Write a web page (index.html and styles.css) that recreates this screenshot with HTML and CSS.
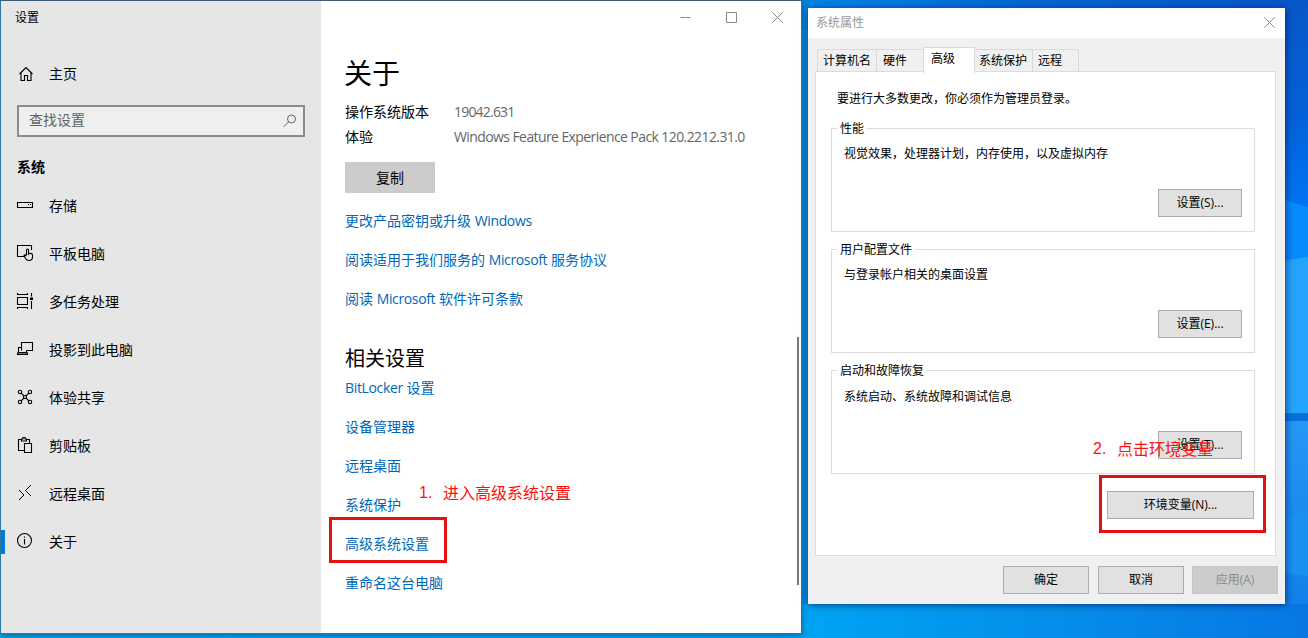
FILE: index.html
```html
<!DOCTYPE html>
<html lang="zh-CN">
<head>
<meta charset="utf-8">
<title>设置</title>
<link rel="stylesheet" href="styles.css">
</head>
<body>
<main class="desktop">
  <svg class="wallpaper" viewBox="0 0 1308 638" preserveAspectRatio="none" aria-hidden="true">
    <defs>
      <linearGradient id="top" x1="800" x2="1308" y1="0" y2="0" gradientUnits="userSpaceOnUse"><stop offset="0" stop-color="#0385e2"/><stop offset=".45" stop-color="#0467d6"/><stop offset="1" stop-color="#0856c8"/></linearGradient>
      <linearGradient id="side" x1="0" x2="0" y1="0" y2="1"><stop offset="0" stop-color="#0857c8"/><stop offset=".5" stop-color="#0460d8"/><stop offset="1" stop-color="#0078fa"/></linearGradient>
      <linearGradient id="low" x1="0" x2="0" y1="0" y2="1"><stop offset="0" stop-color="#2697f5"/><stop offset="1" stop-color="#1180ea"/></linearGradient>
      <linearGradient id="floor" x1="0" x2="1308" y1="0" y2="0" gradientUnits="userSpaceOnUse"><stop offset="0" stop-color="#00a5e8"/><stop offset=".62" stop-color="#00a3f3"/><stop offset=".82" stop-color="#058cea"/><stop offset="1" stop-color="#0877e4"/></linearGradient>
    </defs>
    <rect width="1308" height="638" fill="url(#top)"/>
    <rect x="1270" width="38" height="225" fill="url(#side)"/>
    <rect x="795" y="30" width="20" height="608" fill="#058fdf"/>
    <path d="M1270 196L1308 207V270H1270Z" fill="#058cfd"/>
    <path d="M1270 263L1308 257V420H1270Z" fill="#24a3fc"/>
    <rect x="1270" y="413" width="38" height="8" fill="#0870dd"/>
    <rect x="1270" y="421" width="38" height="183" fill="url(#low)"/>
    <path d="M1270 518L1308 511V576L1270 571Z" fill="#1a90f0"/>
    <rect y="604" width="1308" height="34" fill="url(#floor)"/>
  </svg>

  <section class="settings">
    <aside class="sidebar">
      <div class="app-title">设置</div>
      <div class="home">
        <svg class="icon" viewBox="0 0 16 16"><path d="M1.500 8L8 1.500 14.500 8M3 7v7.500h3.500V9.500h3v5H13V7"/></svg>
        <span>主页</span>
      </div>
      <div class="search">
        <span>查找设置</span>
        <svg class="search-icon" viewBox="0 0 14 14"><circle cx="8.500" cy="5" r="4"/><path d="M5.700 7.800L.8 12.700"/></svg>
      </div>
      <h2 class="group-title">系统</h2>
      <nav class="nav">
        <a class="nav-item"><svg class="icon" viewBox="0 0 16 16"><path d="M.5 5.500h15v5H.5zM11 7.500h1M13 7.500h1"/></svg><span>存储</span></a>
        <a class="nav-item"><svg class="icon" viewBox="0 0 16 16"><path d="M7 11.500H.5v-11h14V5M9.500 10V5q0-1 1-1t1 1v3l3 .6q1 .3 1 1.400v2q0 3.500-3.500 3.500-2.500 0-3.500-2l-1.500-3 1-.7 1.500 1.200M11.500 8v2"/></svg><span>平板电脑</span></a>
        <a class="nav-item"><svg class="icon" viewBox="0 0 16 16"><path d="M.5 4.500h10v7H.5zM.5 0v1.500h10V0M.5 16v-1.500h10V16M14.500 0v3.500M14.500 8v8"/><rect class="solid" x="13" y="4.500" width="3" height="2.500"/></svg><span>多任务处理</span></a>
        <a class="nav-item"><svg class="icon" viewBox="0 0 16 16"><path d="M4.500 9.500v-8h11v8h-6M4 6.500H1.500v5h8v-2M.5 13.500h10v-1.500H.5z"/></svg><span>投影到此电脑</span></a>
        <a class="nav-item"><svg class="icon" viewBox="0 0 16 16"><circle cx="3" cy="3" r="1.700"/><circle cx="13" cy="3" r="1.700"/><circle cx="3" cy="13" r="1.700"/><circle cx="13" cy="13" r="1.700"/><circle cx="8" cy="8" r="1.500"/><path d="M4.200 4.200L7 7M11.800 4.200L9 7M4.200 11.800L7 9M11.800 11.800L9 9"/></svg><span>体验共享</span></a>
        <a class="nav-item"><svg class="icon" viewBox="0 0 16 16"><path d="M7 13.500H1.500v-11H4M9 2.500h3.500V6M4.500 4V2h1.500V.5h2V2h1.500v2zM7.500 6.500h7v9h-7z"/></svg><span>剪贴板</span></a>
        <a class="nav-item"><svg class="icon" viewBox="0 0 16 16"><path class="thin" d="M2 5l5 5-5 5M14 0L8.500 5.500 14 11"/></svg><span>远程桌面</span></a>
        <a class="nav-item current"><svg class="icon" viewBox="0 0 16 16"><circle cx="7.500" cy="7.500" r="7"/><path d="M7.500 6v5.500M7.500 3.500v1.300"/></svg><span>关于</span></a>
      </nav>
    </aside>

    <div class="about">
      <div class="controls">
        <svg viewBox="0 0 11 11"><path d="M.5 5.500h10"/></svg>
        <svg viewBox="0 0 11 11"><path d="M.5.5h10v10H.5z"/></svg>
        <svg viewBox="0 0 11 11"><path d="M.3.3l10.400 10.400M10.700.3L.3 10.700"/></svg>
      </div>
      <h1 class="page-title">关于</h1>
      <dl class="specs">
        <dt>操作系统版本</dt><dd class="build">19042.631</dd>
        <dt>体验</dt><dd>Windows Feature Experience Pack 120.2212.31.0</dd>
      </dl>
      <button class="copy">复制</button>
      <div class="links">
        <a>更改产品密钥或升级 <span class="latin">Windows</span></a>
        <a>阅读适用于我们服务的 <span class="latin">Microsoft</span> 服务协议</a>
        <a>阅读 <span class="latin">Microsoft</span> 软件许可条款</a>
      </div>
      <h2 class="related-title">相关设置</h2>
      <div class="links">
        <a><span class="latin">BitLocker</span> 设置</a>
        <a>设备管理器</a>
        <a>远程桌面</a>
        <a>系统保护</a>
        <a>高级系统设置</a>
        <a>重命名这台电脑</a>
      </div>
      <div class="scrollbar"></div>
    </div>
  </section>

  <section class="dialog">
    <header class="dialog-bar">
      <span>系统属性</span>
      <svg class="close" viewBox="0 0 11 11"><path d="M.3.3l10.400 10.400M10.700.3L.3 10.700"/></svg>
    </header>
    <div class="tabs">
      <span class="tab tab-name">计算机名</span>
      <span class="tab tab-hardware">硬件</span>
      <span class="tab tab-advanced">高级</span>
      <span class="tab tab-protect">系统保护</span>
      <span class="tab tab-remote">远程</span>
    </div>
    <div class="panel">
      <p class="notice">要进行大多数更改，你必须作为管理员登录。</p>
      <div class="group"><span class="legend">性能</span><p>视觉效果，处理器计划，内存使用，以及虚拟内存</p><button class="btn">设置(S)...</button></div>
      <div class="group"><span class="legend">用户配置文件</span><p>与登录帐户相关的桌面设置</p><button class="btn">设置(E)...</button></div>
      <div class="group"><span class="legend">启动和故障恢复</span><p class="lower">系统启动、系统故障和调试信息</p><button class="btn">设置(T)...</button></div>
      <button class="btn env">环境变量(N)...</button>
    </div>
    <footer class="actions">
      <button class="btn">确定</button>
      <button class="btn">取消</button>
      <button class="btn disabled">应用(A)</button>
    </footer>
  </section>

  <div class="mark mark-link"></div>
  <div class="mark mark-env"></div>
  <div class="note note-one"><span class="step">1.</span><span>进入高级系统设置</span></div>
  <div class="note note-two"><span class="step">2.</span><span>点击环境变量</span></div>
</main>
</body>
</html>
```

FILE: styles.css
```css
* { box-sizing: border-box; }
body { margin: 0; overflow: hidden; }
h1, h2, p, dl, dd { margin: 0; font-weight: 400; }
button { padding: 0; font: inherit; color: inherit; }

.desktop {
  position: relative;
  width: 1308px;
  height: 638px;
  overflow: hidden;
  font-family: "Open Sans", "Noto Sans CJK SC", sans-serif;
  font-size: 14px;
  line-height: 20px;
  color: #000;
  white-space: nowrap;
}
.wallpaper { position: absolute; inset: 0; width: 100%; height: 100%; }

/* Settings window */
.settings {
  position: absolute;
  left: 0;
  top: 0;
  width: 802px;
  height: 634px;
  display: flex;
  border: 1px solid #27799f;
  border-top-color: #3d5a78;
  background: #fff;
  box-shadow: 0 1px 7px rgba(0, 40, 80, .5);
}
.sidebar { width: 320px; background: #e6e6e6; }
.app-title { height: 25px; padding: 8px 0 0 14px; font-size: 12px; line-height: 18px; }
.home { display: flex; align-items: center; gap: 15px; height: 24px; margin: 36px 0 0 17px; }
.icon {
  flex: none;
  width: 16px;
  height: 16px;
  overflow: visible;
  fill: none;
  stroke: #000;
  stroke-width: 1.1;
}
.icon .solid { fill: #000; stroke: none; }
.icon .thin { stroke-width: 1; }
.search {
  display: flex;
  align-items: center;
  justify-content: space-between;
  width: 288px;
  height: 32px;
  margin: 19px 0 0 16px;
  padding: 0 6px 2px 10px;
  border: 2px solid #8b8b8b;
  background: #efefef;
  color: #626262;
}
.search-icon { width: 14px; height: 14px; fill: none; stroke: #666; margin-top: 2px; }
.group-title { margin: 20px 0 0 16px; font-size: 14px; line-height: 20px; font-weight: 700; }
.nav { display: flex; flex-direction: column; margin-top: 5px; }
.nav-item { display: flex; align-items: center; gap: 16px; height: 48px; padding-left: 16px; }
.nav-item .icon { margin-top: -3px; }
.nav-item.current {
  background: linear-gradient(#0078d4, #0078d4) 0 12px / 4px 24px no-repeat;
}

.about { position: relative; flex: 1; padding-left: 24px; }
.controls { display: flex; justify-content: flex-end; gap: 35px; height: 44px; padding: 11px 18px 0 0; }
.controls svg, .close { width: 11px; height: 11px; fill: none; stroke: #888; stroke-width: 1; }
.page-title { font-size: 28px; line-height: 40px; margin: 8px 0 0 -1px; }
.specs { display: grid; grid-template-columns: 109px auto; grid-auto-rows: 25px; margin-top: 6px; line-height: 25px; }
.specs dd { color: #666; font-size: 14px; letter-spacing: -.59px; }
.specs .build { letter-spacing: -.8px; }
.copy { display: block; width: 90px; height: 31px; margin-top: 13px; border: 0; background: #ccc; }
.links { display: flex; flex-direction: column; gap: 19px; margin-top: 18px; color: #0067b8; }
.links a { height: 20px; }
.latin { letter-spacing: -.35px; }
.related-title { margin-top: 35px; font-size: 20px; line-height: 30px; }
.related-title + .links { margin-top: 4px; }
.scrollbar { position: absolute; top: 336px; right: 2px; width: 2px; height: 248px; background: #777; }

/* System properties dialog */
.dialog {
  position: absolute;
  left: 808px;
  top: 8px;
  width: 477px;
  height: 596px;
  background: #f0f0f0;
  font-size: 12px;
  line-height: 18px;
  box-shadow: 1px 1px 7px rgba(0, 25, 80, .7);
}
.dialog-bar {
  display: flex;
  align-items: center;
  justify-content: space-between;
  height: 30px;
  padding: 0 10px 1px 8px;
  background: #fff;
  color: #999;
}
.tabs { display: flex; align-items: flex-end; height: 34px; margin: 0 0 0 9px; }
.tab {
  height: 23px;
  padding-left: 5px;
  border: 1px solid #d9d9d9;
  border-bottom: 0;
  border-left: 0;
  line-height: 22px;
}
.tab-name { width: 60px; border-left: 1px solid #d9d9d9; }
.tab-hardware { width: 46px; border-right: 0; padding-left: 6px; }
.tab-advanced {
  position: relative;
  width: 52px;
  height: 26px;
  margin-bottom: -1px;
  padding-left: 7px;
  border-left: 1px solid #d9d9d9;
  background: #fff;
}
.tab-protect { width: 58px; padding-left: 4px; }
.tab-remote { width: 46px; padding-left: 5px; }
.panel {
  width: 461px;
  height: 485px;
  margin: -1px 0 0 7px;
  padding: 18px 20px 0 15px;
  border: 1px solid #dcdcdc;
  background: #fff;
}
.notice { padding-left: 6px; }
.group {
  display: flex;
  flex-direction: column;
  width: 424px;
  height: 104px;
  margin-top: 17px;
  padding: 0 12px 14px 12px;
  border: 1px solid #dcdcdc;
}
.notice + .group { margin-top: 20px; }
.legend { align-self: flex-start; margin: -9px 0 0 -7px; padding: 0 3px; background: #fff; }
.group p { margin-top: 7px; }
.group .lower { margin-top: 8px; }
.group .btn { margin: auto 0 0 auto; }
.btn { display: block; width: 84px; height: 28px; border: 1px solid #adadad; background: #e1e1e1; }
.btn.env { width: 147px; margin: 17px 1px 0 auto; }
.actions { display: flex; gap: 8px; justify-content: flex-end; padding: 10px 7px 0 0; }
.actions .btn { width: 86px; }
.actions .btn:first-child { margin-right: 1px; }
.btn.disabled { border-color: #c4c4c4; background: #ccc; color: #8b8b8b; }

/* Annotations over the windows */
.mark { position: absolute; border: 3px solid #e60f10; }
.mark-link { left: 329px; top: 517px; width: 118px; height: 46px; }
.mark-env { left: 1099px; top: 475px; width: 167px; height: 58px; }
.note { position: absolute; display: flex; color: #ff1010; font-size: 16px; line-height: 20px; }
.step { width: 24px; font-family: "Liberation Sans", sans-serif; }
.note-one { left: 419px; top: 483px; }
.note-two { left: 1093px; top: 439px; }
```
